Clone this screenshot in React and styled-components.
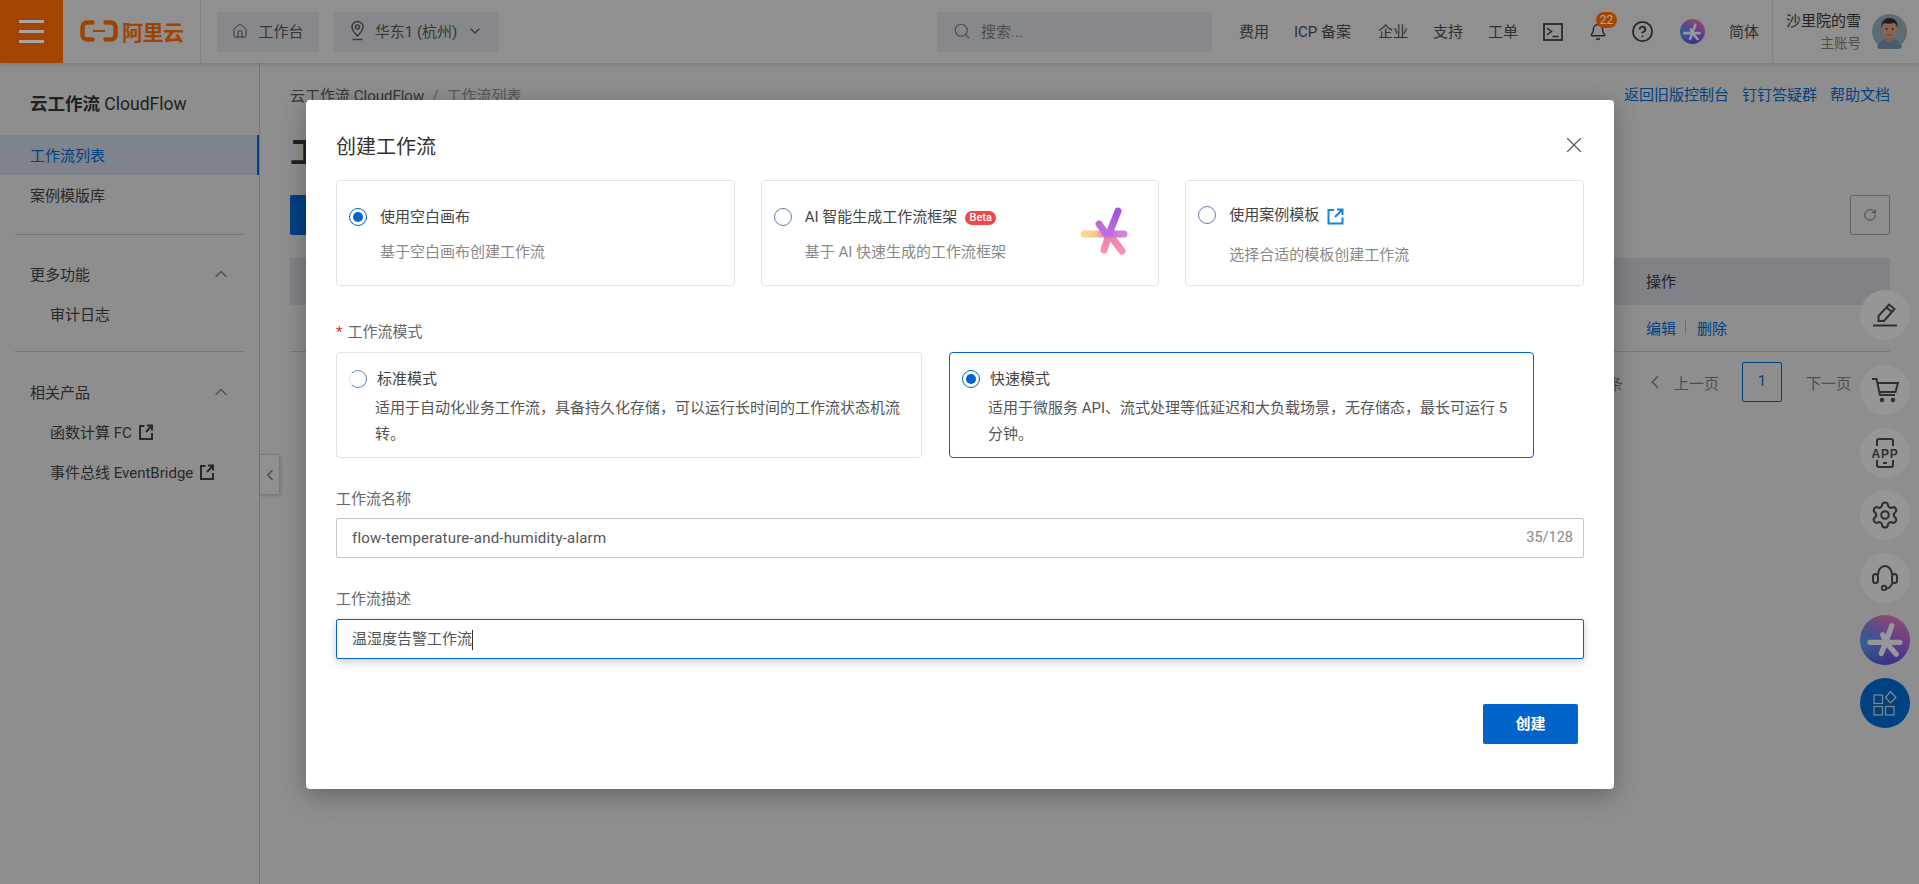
import React from "react";
import styled, { createGlobalStyle } from "styled-components";
import { House, ChevronDown, ChevronUp, ChevronLeft, Search, Bell, CircleHelp, RotateCw, Settings, X } from "lucide-react";

const Global = createGlobalStyle`
  html, body { margin: 0; padding: 0; height: 100%; overflow: hidden; }
  body { font-family: Roboto, "Noto Sans CJK SC", "Noto Sans", sans-serif; font-size: 15px; color: #333; background: #dadada; }
  * { box-sizing: border-box; }
`;

const Page = styled.div`
  position: relative;
  width: 1919px;
  height: 884px;
  display: flex;
  flex-direction: column;
  overflow: hidden;
`;

/* ---------- top bar ---------- */
const Topbar = styled.header`
  height: 63px;
  flex: none;
  display: flex;
  align-items: center;
  background: #dedede;
  box-shadow: 0 1px 4px rgba(0,0,0,.18);
  position: relative;
  z-index: 2;
  color: #4a4a4a;
`;
const Burger = styled.div`
  width: 63px;
  height: 63px;
  background: #fb6a04;
  display: flex;
  flex-direction: column;
  justify-content: center;
  align-items: center;
  gap: 7px;
  span { display: block; width: 25px; height: 3px; background: #fff; }
`;
const LogoBox = styled.div`
  width: 138px;
  height: 63px;
  padding: 0 0 2px 17px;
  border-right: 1px solid #c8c8c8;
  display: flex;
  align-items: center;
  gap: 4px;
  color: #f56800;
`;
const LogoText = styled.span`
  font-size: 21px;
  font-weight: 700;
  letter-spacing: -.5px;
`;
const TopChip = styled.div`
  height: 40px;
  width: ${p => p.$w}px;
  margin-left: ${p => p.$ml}px;
  padding-bottom: 2px;
  background: #ced1d7;
  display: flex;
  align-items: center;
  justify-content: center;
  gap: ${p => p.$gap || 10}px;
  font-size: 15px;
  color: #555;
`;
const SearchBox = styled.div`
  margin-left: auto;
  width: 275px;
  height: 40px;
  background: #ced1d7;
  display: flex;
  align-items: center;
  padding: 0 0 2px 16px;
  gap: 10px;
  color: #777;
  font-size: 15px;
`;
const NavItem = styled.span`
  margin-left: ${p => p.$ml}px;
  margin-bottom: 2px;
  min-width: ${p => p.$min || 0}px;
  font-size: 15px;
  white-space: nowrap;
  color: #4a4a4a;
`;
const NavIcon = styled.span`
  position: relative;
  display: flex;
  margin-left: ${p => p.$ml}px;
  color: #3d3d3d;
`;
const Badge = styled.span`
  position: absolute;
  left: 7px;
  top: -11px;
  width: 21px;
  height: 16px;
  border-radius: 8px;
  background: #ff6a00;
  color: #fff;
  font-size: 12px;
  line-height: 16px;
  text-align: center;
`;
const StarDisc = styled.span`
  display: flex;
  align-items: center;
  justify-content: center;
  width: ${p => p.$size}px;
  height: ${p => p.$size}px;
  margin-left: ${p => p.$ml || 0}px;
  border-radius: 50%;
  background:
    radial-gradient(circle at 8% 55%, #4f95e0 0, rgba(79,149,224,0) 55%),
    linear-gradient(200deg, #e67e9c 0%, #9d5fd8 45%, #3544c8 100%);
`;
const UserBox = styled.div`
  margin-left: 13px;
  width: 147px;
  height: 63px;
  border-left: 1px solid #c8c8c8;
  display: flex;
  align-items: center;
  justify-content: flex-end;
  padding-right: 12px;
  gap: 11px;
`;
const UserText = styled.div`
  display: flex;
  flex-direction: column;
  align-items: flex-end;
  gap: 2px;
`;
const UserName = styled.span`
  font-size: 15px;
  line-height: 20px;
  color: #333;
`;
const UserRole = styled.span`
  font-size: 13.5px;
  line-height: 20px;
  color: #777;
`;

/* ---------- main ---------- */
const Main = styled.div`
  flex: 1;
  display: flex;
  min-height: 0;
  position: relative;
`;
const Sidebar = styled.aside`
  width: 260px;
  flex: none;
  border-right: 1px solid #b2b2b2;
  padding-top: 30px;
`;
const SideTitle = styled.div`
  padding-left: 30px;
  height: 24px;
  line-height: 22px;
  font-size: 17.5px;
  font-weight: 700;
  color: #333;
  margin-bottom: 18px;
  span { font-weight: 400; }
`;
const SideItem = styled.div`
  height: 40px;
  display: flex;
  align-items: center;
  gap: 7px;
  padding-left: ${p => (p.$sub ? 50 : 30)}px;
  padding-bottom: 2px;
  font-size: 15px;
  color: ${p => (p.$active ? "#0064c8" : "#3f3f3f")};
  background: ${p => (p.$active ? "#c4c9d8" : "transparent")};
  border-right: ${p => (p.$active ? "2px solid #0064c8" : "0")};
  svg { margin-top: 2px; }
`;
const SideDivider = styled.div`
  height: 1px;
  margin: ${p => p.$mt}px 15px 0 15px;
  background: #b4b4b4;
`;
const SideGroup = styled.div`
  height: 40px;
  margin-top: ${p => p.$mt}px;
  padding: 0 28px 2px 30px;
  display: flex;
  align-items: center;
  justify-content: space-between;
  color: #3f3f3f;
  svg { color: #777; margin-top: 2px; }
`;
const Handle = styled.div`
  position: absolute;
  left: 260px;
  top: 391px;
  width: 20px;
  height: 41px;
  background: #dedede;
  border: 1px solid #bbb;
  border-left: 0;
  border-radius: 0 2px 2px 0;
  box-shadow: 1px 1px 3px rgba(0,0,0,.15);
  display: flex;
  align-items: center;
  justify-content: center;
  color: #666;
`;

const Content = styled.main`
  flex: 1;
  min-width: 0;
  padding: 20px 29px 0 30px;
`;
const TopRow = styled.div`
  height: 22px;
  display: flex;
  justify-content: space-between;
  align-items: center;
  font-size: 15px;
  color: #555;
`;
const Crumb = styled.span`
  color: ${p => (p.$muted ? "#888" : "#555")};
  margin-right: 8px;
`;
const Links = styled.div`
  display: flex;
  gap: 13px;
  padding-bottom: 2px;
  color: #0064c8;
`;
const PageTitle = styled.h1`
  margin: 30px 0 0;
  height: 35px;
  line-height: 35px;
  font-size: 31px;
  font-weight: 700;
  color: #333;
  white-space: nowrap;
`;
const Actions = styled.div`
  margin-top: 25px;
  display: flex;
  justify-content: space-between;
`;
const PrimarySlab = styled.div`
  height: 40px;
  width: 120px;
  background: #0064c8;
  border-radius: 2px;
`;
const RefreshBtn = styled.div`
  width: 40px;
  height: 40px;
  border: 1px solid #999;
  border-radius: 2px;
  display: flex;
  align-items: center;
  justify-content: center;
  color: #555;
`;
const TableHead = styled.div`
  margin-top: 23px;
  height: 47px;
  padding-bottom: 2px;
  background: #c5c8d2;
  display: grid;
  grid-template-columns: 1fr 244px;
  align-items: center;
  color: #333;
`;
const TableRow = styled.div`
  height: 47px;
  padding-bottom: 2px;
  border-bottom: 1px solid #b8b8b8;
  display: grid;
  grid-template-columns: 1fr 244px;
  align-items: center;
`;
const RowLinks = styled.div`
  display: flex;
  align-items: center;
  color: #0064c8;
`;
const Sep = styled.span`
  width: 1px;
  height: 14px;
  background: #aaa;
  margin: 0 11px 0 9px;
`;
const Pager = styled.div`
  margin-top: 10px;
  height: 40px;
  display: flex;
  align-items: center;
  justify-content: flex-end;
  padding-right: 39px;
  color: #777;
`;
const PagerTotal = styled.span`
  margin-right: 21px;
`;
const PagerPrev = styled.span`
  display: flex;
  align-items: center;
  gap: 8px;
  margin-right: 23px;
`;
const PagerCurrent = styled.span`
  width: 40px;
  height: 40px;
  padding-bottom: 2px;
  border: 1px solid #0064c8;
  border-radius: 2px;
  color: #0064c8;
  display: flex;
  align-items: center;
  justify-content: center;
  margin-right: 24px;
`;

/* ---------- floats ---------- */
const Floats = styled.div`
  position: absolute;
  right: 9px;
  top: 290px;
  display: flex;
  flex-direction: column;
  gap: 12.5px;
  z-index: 3;
`;
const FloatBtn = styled.div`
  width: 50px;
  height: 50px;
  border-radius: 50%;
  background: ${p => p.$bg || "#e6e6e6"};
  margin-bottom: ${p => p.$mb || 0}px;
  display: flex;
  align-items: center;
  justify-content: center;
  color: #4a4a4a;
`;

/* ---------- modal ---------- */
const Overlay = styled.div`
  position: absolute;
  inset: 0;
  background: rgba(0,0,0,.35);
  z-index: 10;
`;
const Modal = styled.section`
  position: absolute;
  left: 306px;
  top: 100px;
  width: 1308px;
  height: 689px;
  background: #fff;
  border-radius: 4px;
  box-shadow: 0 6px 24px rgba(0,0,0,.3);
  padding: 32px 30px 0;
  z-index: 11;
  color: #555;
`;
const ModalHead = styled.div`
  display: flex;
  align-items: center;
  justify-content: space-between;
  height: 28px;
  padding-bottom: 2px;
  margin-bottom: 20px;
`;
const ModalTitle = styled.h2`
  margin: 0;
  font-size: 20px;
  font-weight: 400;
  color: #333;
`;
const CloseIcon = styled(X)`
  margin-right: -3px;
  color: #555;
`;
const TemplateGrid = styled.div`
  display: grid;
  grid-template-columns: repeat(3, 1fr);
  gap: 26px;
`;
const TemplateCard = styled.div`
  height: 106px;
  border: 1px solid #e3e3e3;
  border-radius: 4px;
  padding: ${p => (p.$tall ? 24 : 26)}px 0 0 12px;
  display: flex;
`;
const Radio = styled.span`
  flex: none;
  width: 18px;
  height: 18px;
  margin-top: 1px;
  border-radius: 50%;
  border: 1.5px solid ${p => (p.$on ? "#0064c8" : "#5f83ad")};
  border-left-color: ${p => (p.$on ? "#0064c8" : p.$gap ? "#dbe3ec" : "#5f83ad")};
  display: flex;
  align-items: center;
  justify-content: center;
  &::after {
    content: "";
    display: ${p => (p.$on ? "block" : "none")};
    width: 10px;
    height: 10px;
    border-radius: 50%;
    background: #0064c8;
  }
`;
const CardBody = styled.div`
  margin-left: 13px;
  display: flex;
  flex-direction: column;
  gap: ${p => (p.$tall ? 17 : 12)}px;
`;
const CardTitle = styled.div`
  height: 22px;
  padding-bottom: 2px;
  line-height: 20px;
  display: flex;
  align-items: center;
  gap: 8px;
  color: #444;
  svg { margin-top: 2px; }
`;
const CardSub = styled.div`
  line-height: 22px;
  color: #888;
`;
const Beta = styled.span`
  height: 14px;
  width: 31px;
  margin-top: 2px;
  border-radius: 7px;
  background: #f04848;
  color: #fff;
  font-size: 11px;
  font-weight: 500;
  line-height: 14px;
  text-align: center;
`;
const StarSlot = styled.div`
  margin: 0 30px 0 auto;
  align-self: center;
  transform: translateY(-15px);
  display: flex;
`;
const FieldLabel = styled.label`
  display: flex;
  gap: 5px;
  height: 22px;
  line-height: 20px;
  margin-top: ${p => p.$mt}px;
  margin-bottom: ${p => p.$mb}px;
  color: #666;
`;
const Star = styled.span`
  color: #e62d2d;
`;
const ModeGrid = styled.div`
  display: grid;
  grid-template-columns: 586px 585px;
  column-gap: 27px;
`;
const ModeCard = styled.div`
  height: 106px;
  border: 1px solid ${p => (p.$active ? "#0064c8" : "#e3e3e3")};
  border-radius: 4px;
  padding: 16px 20px 0 12px;
`;
const ModeHead = styled.div`
  display: flex;
  gap: 10px;
  height: 22px;
  line-height: 20px;
  color: #444;
`;
const ModeDesc = styled.div`
  margin: 4px 0 0 26px;
  line-height: 26px;
  color: #555;
`;
const InputBox = styled.div`
  height: 40px;
  border: 1px solid ${p => (p.$focus ? "#0064c8" : "#c3c5cc")};
  border-radius: 2px;
  box-shadow: ${p => (p.$focus ? "0 3px 8px rgba(0,0,0,.2)" : "none")};
  padding: 0 10px 1px 15px;
  display: flex;
  align-items: center;
  justify-content: space-between;
  color: #555;
`;
const NameValue = styled.span`
  letter-spacing: .2px;
`;
const Caret = styled.span`
  display: inline-block;
  width: 1px;
  height: 20px;
  background: #333;
  vertical-align: middle;
`;
const Counter = styled.span`
  font-size: 14.5px;
  color: #888;
`;
const Footer = styled.div`
  margin-top: 45px;
  padding-right: 6px;
  display: flex;
  justify-content: flex-end;
`;
const CreateBtn = styled.button`
  width: 95px;
  height: 40px;
  padding: 0 0 3px;
  border: 0;
  border-radius: 2px;
  background: #0064c8;
  color: #fff;
  font: 700 15px "Noto Sans CJK SC", sans-serif;
`;

/* ---------- drawings ---------- */
const AliLogo = () => (
  <svg width="38" height="22" viewBox="0 0 38 22" fill="none" stroke="currentColor">
    <path d="M12.5 2.5H7a4.5 4.5 0 0 0-4.5 4.5v8A4.5 4.5 0 0 0 7 19.5h5.5" strokeWidth="4.4" strokeLinecap="round" />
    <path d="M25.5 2.5H31a4.5 4.5 0 0 1 4.5 4.5v8a4.5 4.5 0 0 1-4.5 4.5h-5.5" strokeWidth="4.4" strokeLinecap="round" />
    <path d="M13 11h12" strokeWidth="2" />
  </svg>
);
const PinIcon = () => (
  <svg width="15" height="21" viewBox="0 0 15 21" fill="none" stroke="currentColor" strokeWidth="1.4">
    <path d="M7.5 16C4 12.5 2 10 2 7a5.5 5.5 0 0 1 11 0c0 3-2 5.500-5.500 9Z" />
    <circle cx="7.500" cy="7" r="2" />
    <path d="M2.500 19.500h10" />
  </svg>
);
const TermIcon = () => (
  <svg width="20" height="18" viewBox="0 0 20 18" fill="none" stroke="currentColor" strokeWidth="1.8">
    <rect x="1" y="1" width="18" height="16" />
    <path d="M4 5l4.500 3.500L4 12M9.500 13.500h6" strokeWidth="1.500" />
  </svg>
);
const ExtIcon = ({ color = "currentColor" }) => (
  <svg width="14" height="16" viewBox="0 0 14 16" fill="none" stroke={color} strokeWidth="2">
    <path d="M5.500 2H1v13h12V9" />
    <path d="M8 1.500h5v5M13 1.500 7 8" />
  </svg>
);
const ExtBlue = () => (
  <svg width="17" height="17" viewBox="0 0 17 17" fill="none" stroke="#1485dc" strokeWidth="2">
    <path d="M7 2H1.500v13.500H15.500V9.500" />
    <path d="M10 1.500h5.500V7M15.500 1.500 8 9" />
  </svg>
);
const Asterisk = ({ size, color }) => (
  <svg width={size} height={size} viewBox="0 0 48 48" fill="none" stroke={color} strokeWidth="7" strokeLinecap="round">
    <path d="M4 27h40M33 5 25 27M21 17l4 10M25 27 19 42M25 27l14 16" />
  </svg>
);
const AiStar = () => (
  <svg width="48" height="48" viewBox="0 0 48 48" fill="none" strokeWidth="7" strokeLinecap="round">
    <defs>
      <linearGradient id="h" gradientUnits="userSpaceOnUse" x1="3" y1="0" x2="45" y2="0">
        <stop offset="0" stopColor="#ffd98c" />
        <stop offset=".3" stopColor="#f6c68e" />
        <stop offset=".6" stopColor="#c46fd6" />
        <stop offset="1" stopColor="#d486cf" />
      </linearGradient>
      <linearGradient id="t" gradientUnits="userSpaceOnUse" x1="38" y1="3" x2="26" y2="27">
        <stop offset="0" stopColor="#a552dd" />
        <stop offset="1" stopColor="#bf6fe0" />
      </linearGradient>
      <linearGradient id="b" gradientUnits="userSpaceOnUse" x1="0" y1="27" x2="0" y2="45">
        <stop offset="0" stopColor="#e67fb6" />
        <stop offset="1" stopColor="#ff90a6" />
      </linearGradient>
    </defs>
    <path d="M24 43 29 27M42 44 29 27" stroke="url(#b)" />
    <path d="M4 27h40" stroke="url(#h)" />
    <path d="M38 4 29 27M19 17l7 10" stroke="url(#t)" />
  </svg>
);
const Avatar = () => (
  <svg width="35" height="35" viewBox="0 0 35 35">
    <circle cx="17.500" cy="17.500" r="17.500" fill="#8fa5b3" />
    <path d="M5 33c2-6 7-8 12.500-8S28 27 30 33a17.500 17.500 0 0 1-25 0Z" fill="#6f8fa5" />
    <path d="M14 22h7v5l-3.500 2-3.500-2Z" fill="#c08f72" />
    <ellipse cx="17.500" cy="15.500" rx="7.500" ry="9" fill="#d09f80" />
    <path d="M9.500 14c-.8-7 3.500-10 8-10s9 3 8 10c-1-3-2-5-4-5-3 1-7 1-9.500 0-1.500 1-2 3-2.500 5Z" fill="#3a2a22" />
    <circle cx="14.500" cy="15" r=".9" fill="#222" />
    <circle cx="20.500" cy="15" r=".9" fill="#222" />
    <path d="M15 20.500c1.500.8 3.500.8 5 0" stroke="#7c4a3a" strokeWidth=".8" fill="none" />
  </svg>
);
const PenIcon = () => (
  <svg width="28" height="28" viewBox="0 0 28 28" fill="none" stroke="currentColor" strokeWidth="2">
    <path d="M18 3.500 23.500 8 13 20H7.500v-5Z" />
    <path d="M15.500 6.500 21 11" />
    <path d="M2 24.500h24" />
  </svg>
);
const CartIcon = () => (
  <svg width="28" height="28" viewBox="0 0 28 28" fill="none" stroke="currentColor" strokeWidth="2">
    <path d="M1 3h4.500l3.500 16h15" />
    <path d="M6.500 7H27l-2.500 9H8.500" />
    <circle cx="11" cy="24" r="2.200" fill="currentColor" stroke="none" />
    <circle cx="22" cy="24" r="2.200" fill="currentColor" stroke="none" />
  </svg>
);
const AppIcon = () => (
  <svg width="28" height="32" viewBox="0 0 28 32" fill="none" stroke="currentColor" strokeWidth="2">
    <path d="M6 9V4a2 2 0 0 1 2-2h12a2 2 0 0 1 2 2v5M6 23v5a2 2 0 0 0 2 2h12a2 2 0 0 0 2-2v-5" />
    <path d="M12 26h4" />
    <text x="14" y="20.500" textAnchor="middle" fontSize="12" fontWeight="700" fill="currentColor" stroke="none" fontFamily="Liberation Sans, sans-serif" letterSpacing=".8">APP</text>
  </svg>
);
const HeadsetIcon = () => (
  <svg width="28" height="26" viewBox="0 0 28 26" fill="none" stroke="currentColor" strokeWidth="2">
    <rect x="2" y="9" width="5" height="9" rx="2.500" />
    <rect x="21" y="9" width="5" height="9" rx="2.500" />
    <path d="M7 10c0-5 3-9 7-9s7 4 7 9" />
    <path d="M21 18c0 3-3 5.500-6 5.500" />
    <circle cx="13" cy="23" r="2.200" />
  </svg>
);
const ShapesIcon = () => (
  <svg width="28" height="28" viewBox="0 0 28 28" fill="none" stroke="#d0d0d0" strokeWidth="1.2">
    <rect x="3" y="6" width="8.500" height="8.500" />
    <rect x="3" y="17.500" width="8.500" height="8.500" />
    <rect x="14.500" y="17.500" width="8.500" height="8.500" />
    <path d="M19.500 2.500 25 8.500 19.500 14 14.500 8.500Z" />
  </svg>
);

export default function App() {
  return (
    <Page>
      <Global />
      <Topbar>
        <Burger><span /><span /><span /></Burger>
        <LogoBox><AliLogo /><LogoText>阿里云</LogoText></LogoBox>
        <TopChip $w={102} $ml={16}><House size={16} strokeWidth={1.5} />工作台</TopChip>
        <TopChip $w={165} $ml={15}><PinIcon />华东1 (杭州)<ChevronDown size={16} /></TopChip>
        <SearchBox><Search size={18} strokeWidth={1.6} />搜索...</SearchBox>
        <NavItem $ml={27}>费用</NavItem>
        <NavItem $ml={25} $min={59}>ICP 备案</NavItem>
        <NavItem $ml={25}>企业</NavItem>
        <NavItem $ml={25}>支持</NavItem>
        <NavItem $ml={25}>工单</NavItem>
        <NavIcon $ml={25}><TermIcon /></NavIcon>
        <NavIcon $ml={26}><Bell size={18} strokeWidth={2} /><Badge>22</Badge></NavIcon>
        <NavIcon $ml={24}><CircleHelp size={23} strokeWidth={1.9} /></NavIcon>
        <StarDisc $size={25} $ml={26}><Asterisk size={18} color="#e8e8f0" /></StarDisc>
        <NavItem $ml={24}>简体</NavItem>
        <UserBox>
          <UserText><UserName>沙里院的雪</UserName><UserRole>主账号</UserRole></UserText>
          <Avatar />
        </UserBox>
      </Topbar>
      <Main>
        <Sidebar>
          <SideTitle>云工作流 <span>CloudFlow</span></SideTitle>
          <SideItem $active>工作流列表</SideItem>
          <SideItem>案例模版库</SideItem>
          <SideDivider $mt={19} />
          <SideGroup $mt={19}>更多功能<ChevronUp size={20} strokeWidth={1.5} /></SideGroup>
          <SideItem $sub>审计日志</SideItem>
          <SideDivider $mt={17} />
          <SideGroup $mt={20}>相关产品<ChevronUp size={20} strokeWidth={1.5} /></SideGroup>
          <SideItem $sub>函数计算 FC<ExtIcon /></SideItem>
          <SideItem $sub>事件总线 EventBridge<ExtIcon /></SideItem>
        </Sidebar>
        <Handle><ChevronLeft size={18} strokeWidth={1.6} /></Handle>
        <Content>
          <TopRow>
            <span><Crumb>云工作流 CloudFlow</Crumb><Crumb $muted>/</Crumb><Crumb $muted>工作流列表</Crumb></span>
            <Links><span>返回旧版控制台</span><span>钉钉答疑群</span><span>帮助文档</span></Links>
          </TopRow>
          <PageTitle>工作流列表</PageTitle>
          <Actions>
            <PrimarySlab />
            <RefreshBtn><RotateCw size={14} strokeWidth={1.4} /></RefreshBtn>
          </Actions>
          <TableHead><span /><span>操作</span></TableHead>
          <TableRow>
            <span />
            <RowLinks><span>编辑</span><Sep /><span>删除</span></RowLinks>
          </TableRow>
          <Pager>
            <PagerTotal>共 1 条</PagerTotal>
            <PagerPrev><ChevronLeft size={22} strokeWidth={1.6} />上一页</PagerPrev>
            <PagerCurrent>1</PagerCurrent>
            <span>下一页</span>
          </Pager>
        </Content>
      </Main>
      <Floats>
        <FloatBtn $mb={12.5}><PenIcon /></FloatBtn>
        <FloatBtn><CartIcon /></FloatBtn>
        <FloatBtn><AppIcon /></FloatBtn>
        <FloatBtn><Settings size={30} strokeWidth={1.7} /></FloatBtn>
        <FloatBtn><HeadsetIcon /></FloatBtn>
        <StarDisc $size={50}><Asterisk size={36} color="#e6e6ee" /></StarDisc>
        <FloatBtn $bg="#0064c8"><ShapesIcon /></FloatBtn>
      </Floats>
      <Overlay />
      <Modal>
        <ModalHead>
          <ModalTitle>创建工作流</ModalTitle>
          <CloseIcon size={26} strokeWidth={1} />
        </ModalHead>
        <TemplateGrid>
          <TemplateCard>
            <Radio $on />
            <CardBody>
              <CardTitle>使用空白画布</CardTitle>
              <CardSub>基于空白画布创建工作流</CardSub>
            </CardBody>
          </TemplateCard>
          <TemplateCard>
            <Radio />
            <CardBody>
              <CardTitle>AI 智能生成工作流框架<Beta>Beta</Beta></CardTitle>
              <CardSub>基于 AI 快速生成的工作流框架</CardSub>
            </CardBody>
            <StarSlot><AiStar /></StarSlot>
          </TemplateCard>
          <TemplateCard $tall>
            <Radio />
            <CardBody $tall>
              <CardTitle>使用案例模板<ExtBlue /></CardTitle>
              <CardSub>选择合适的模板创建工作流</CardSub>
            </CardBody>
          </TemplateCard>
        </TemplateGrid>
        <FieldLabel $mt={36} $mb={8}><Star>*</Star>工作流模式</FieldLabel>
        <ModeGrid>
          <ModeCard>
            <ModeHead><Radio $gap />标准模式</ModeHead>
            <ModeDesc>适用于自动化业务工作流，具备持久化存储，可以运行长时间的工作流状态机流转。</ModeDesc>
          </ModeCard>
          <ModeCard $active>
            <ModeHead><Radio $on />快速模式</ModeHead>
            <ModeDesc>适用于微服务 API、流式处理等低延迟和大负载场景，无存储态，最长可运行 5 分钟。</ModeDesc>
          </ModeCard>
        </ModeGrid>
        <FieldLabel $mt={31} $mb={7}>工作流名称</FieldLabel>
        <InputBox><NameValue>flow-temperature-and-humidity-alarm</NameValue><Counter>35/128</Counter></InputBox>
        <FieldLabel $mt={31} $mb={8}>工作流描述</FieldLabel>
        <InputBox $focus><span>温湿度告警工作流<Caret /></span></InputBox>
        <Footer><CreateBtn>创建</CreateBtn></Footer>
      </Modal>
    </Page>
  );
}
